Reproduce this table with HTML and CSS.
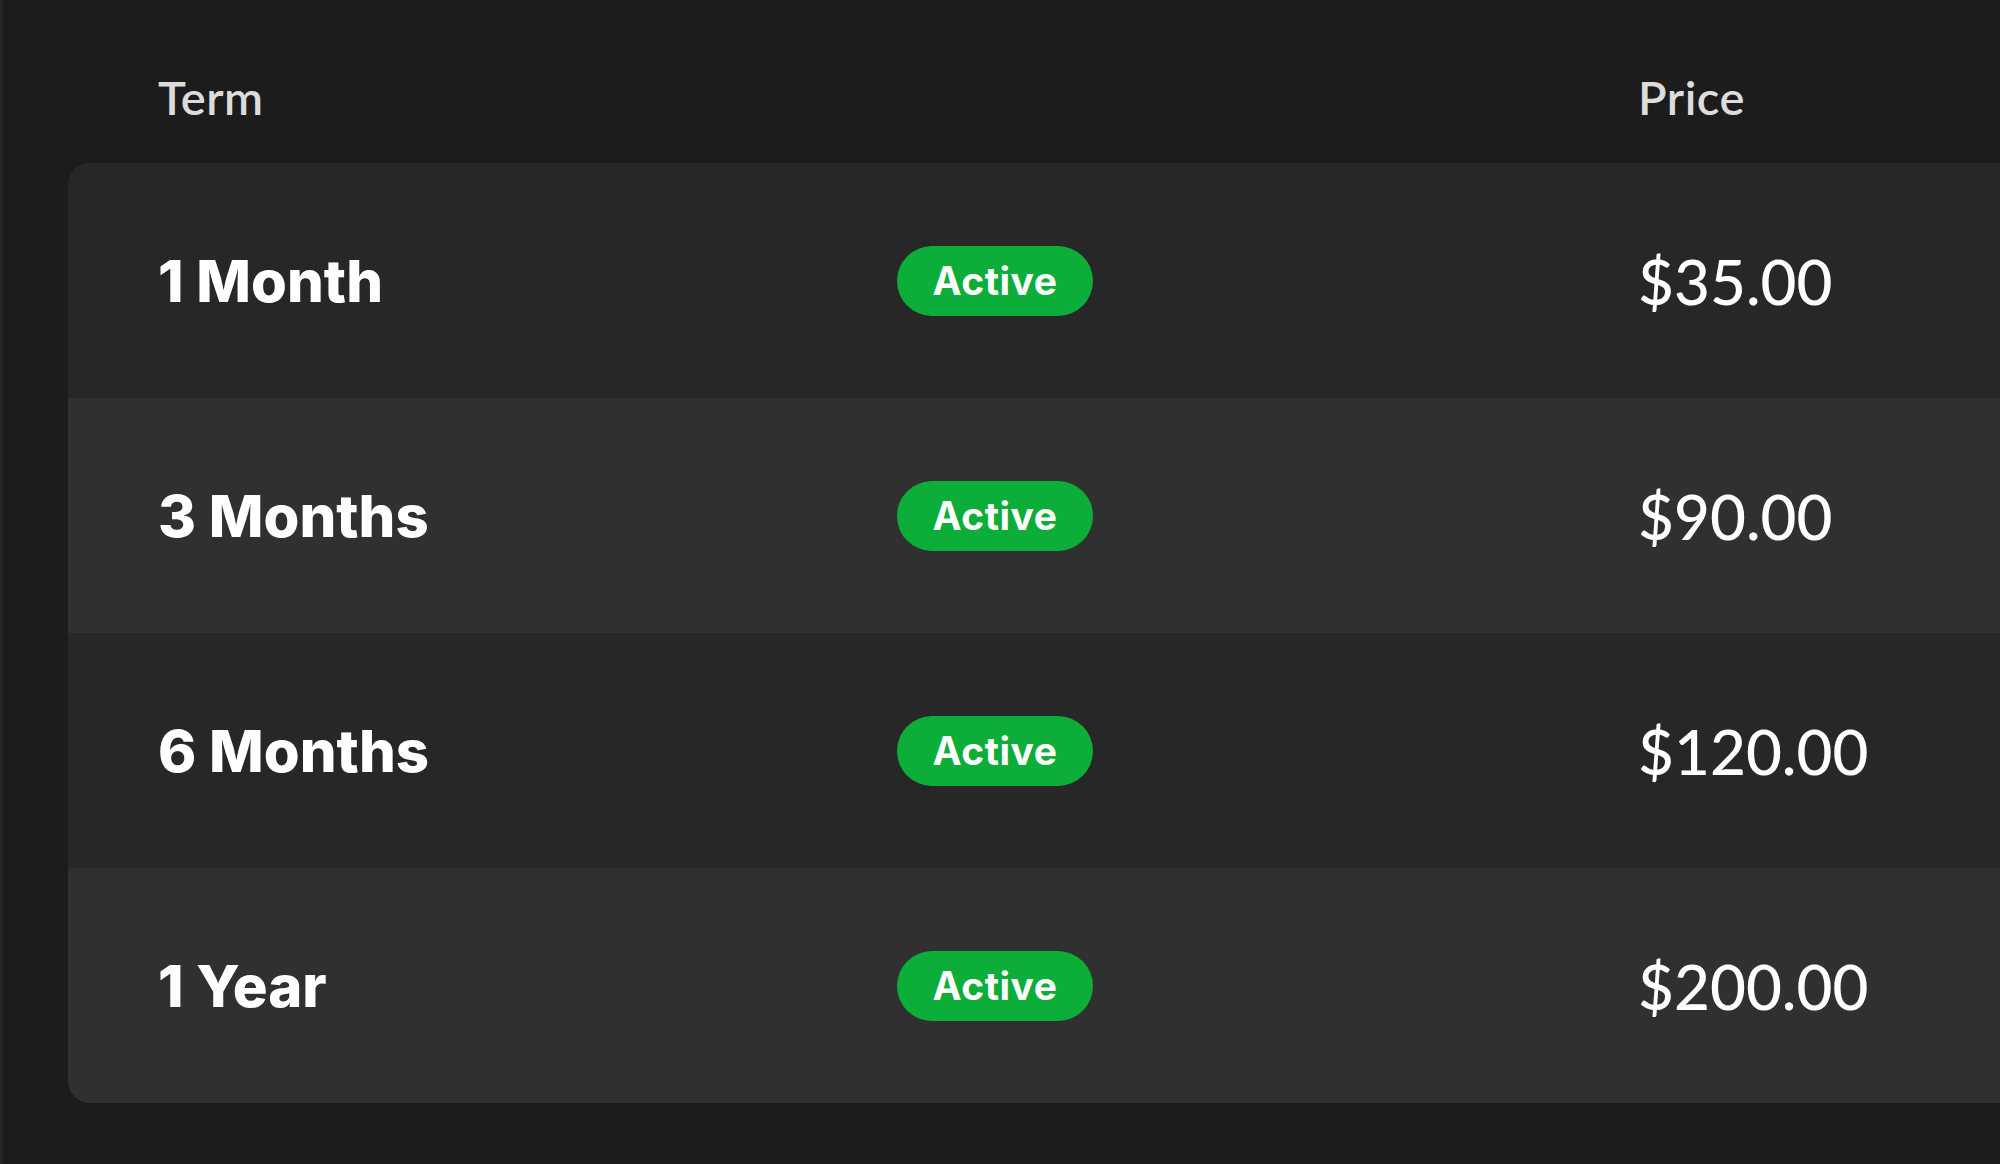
FILE: index.html
```html
<!DOCTYPE html>
<html lang="en">
<head>
<meta charset="utf-8">
<title>Terms</title>
<link rel="stylesheet" href="styles.css">
</head>
<body>
<div class="frame">
  <div class="head">
    <div class="hcell">Term</div>
    <div class="hcell"></div>
    <div class="hcell">Price</div>
  </div>
  <div class="card">
    <div class="row">
      <div class="term">1 Month</div>
      <div class="status"><span class="badge">Active</span></div>
      <div class="price">$35.00</div>
    </div>
    <div class="row alt">
      <div class="term">3 Months</div>
      <div class="status"><span class="badge">Active</span></div>
      <div class="price">$90.00</div>
    </div>
    <div class="row">
      <div class="term">6 Months</div>
      <div class="status"><span class="badge">Active</span></div>
      <div class="price">$120.00</div>
    </div>
    <div class="row alt">
      <div class="term">1 Year</div>
      <div class="status"><span class="badge">Active</span></div>
      <div class="price">$200.00</div>
    </div>
  </div>
</div>
</body>
</html>
```

FILE: styles.css
```css
html, body {
  margin: 0;
  padding: 0;
  height: 100%;
  background: #1c1c1c;
  overflow: hidden;
}
body {
  font-family: Lato, "Noto Sans", sans-serif;
  color: #fff;
}
.frame {
  height: 100%;
  border-left: 3px solid #252525;
  box-sizing: border-box;
  padding-left: 65px;
}
.head {
  display: grid;
  grid-template-columns: 739px 741px 1fr;
  padding-left: 90px;
  height: 163px;
  align-items: center;
  box-sizing: border-box;
  padding-top: 30px;
}
.hcell {
  font-size: 47px;
  font-weight: 600;
  letter-spacing: 0.5px;
  color: #dcdcdc;
}
.card {
  width: 2060px;
  border-radius: 22px;
  overflow: hidden;
  background: #272727;
}
.row {
  display: grid;
  grid-template-columns: 739px 741px 1fr;
  padding-left: 90px;
  height: 235px;
  align-items: center;
  background: #272727;
}
.row.alt {
  background: #303030;
}
.term {
  font-family: Inter, Lato, sans-serif;
  font-size: 58px;
  font-weight: 800;
  color: #fff;
}
.price {
  font-size: 62px;
  font-weight: 500;
  color: #fff;
}
.badge {
  display: inline-flex;
  align-items: center;
  justify-content: center;
  width: 196px;
  height: 70px;
  border-radius: 35px;
  background: #0cad38;
  color: #fff;
  font-family: Inter, Lato, sans-serif;
  font-size: 39px;
  font-weight: 700;
  letter-spacing: 0.5px;
}
```
